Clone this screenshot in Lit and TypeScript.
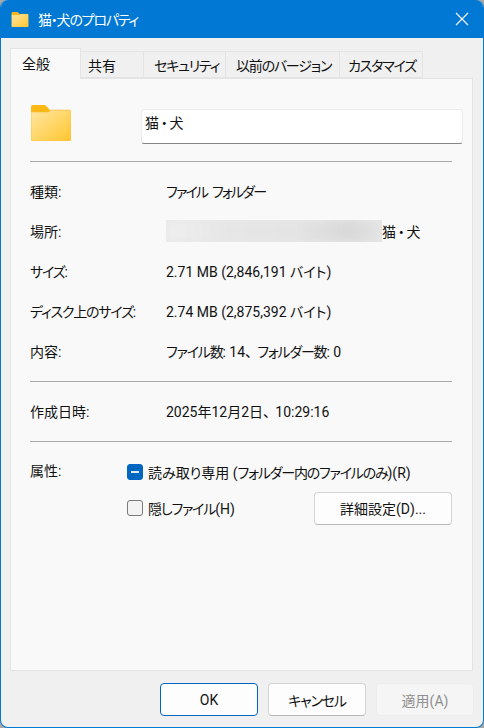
import { LitElement, html, css, svg } from "lit";
import { customElement } from "lit/decorators.js";

const folder = (w: number, h: number, id: string) => html`<svg width=${w} height=${h} viewBox="0 0 40 36">
  <defs><linearGradient id=${id} x1="0" y1="0" x2="1" y2="1"><stop offset="0" stop-color="#ffe6a3"/><stop offset="1" stop-color="#ffc62e"/></linearGradient></defs>
  ${svg`<path d="M0 2a2 2 0 0 1 2-2h11a3 3 0 0 1 2 .8L19 5v6H0z" fill="#fdb813"/>
  <path d="M0 7h17.5l2.5-2h18a2 2 0 0 1 2 2v27a2 2 0 0 1-2 2H2a2 2 0 0 1-2-2z" fill="url(#${id})" stroke="#f5b93a" stroke-width=".6"/>`}
</svg>`;

@customElement("app-root")
export class AppRoot extends LitElement {
  static styles = css`
    :host { display: block; width: 484px; height: 728px; background: #a8a8a8; font-family: Roboto, "Noto Sans CJK JP", sans-serif; font-size: 14px; color: #111; font-feature-settings: "palt"; }
    .k { letter-spacing: -1.2px; }
    .k2 { letter-spacing: -1.8px; word-spacing: 3px; }
    .w { font-feature-settings: normal; letter-spacing: -1.8px; }
    .win { box-sizing: border-box; width: 484px; height: 728px; border-radius: 8px; border: 1px solid #0078d4; border-top: 0; background: #f0f0f0; display: flex; flex-direction: column; overflow: hidden; }
    .title { height: 38px; flex: none; background: #0078d4; color: #fff; display: flex; align-items: center; padding-left: 10px; gap: 9px; font-size: 14px; }
    .title .t { flex: 1; }
    .close { width: 46px; display: flex; justify-content: center; margin-right: -2px; }
    .main { flex: 1; display: flex; flex-direction: column; padding: 10px 10px 0 9px; }
    .tabs { display: flex; align-items: flex-end; height: 30px; position: relative; z-index: 1; }
    .tab { box-sizing: border-box; height: 27px; border: 1px solid #e4e4e4; border-left: 0; padding-top: 1px; display: flex; align-items: center; background: #f0f0f0; white-space: nowrap; }
    .tab.t1 { width: 71px; height: 31px; margin-bottom: -1px; border: 1px solid #e4e4e4; border-bottom: 0; background: #f9f9f9; padding: 0 0 3px 11px; }
    .tab.t2 { width: 63px; padding-left: 7px; }
    .tab.t3 { width: 82px; padding-left: 10px; }
    .tab.t4 { width: 114px; padding-left: 10px; }
    .tab.t5 { width: 83px; padding-left: 8px; }
    .panel { box-sizing: border-box; height: 593px; background: #f9f9f9; border: 1px solid #e4e4e4; padding: 0 20px 0 19px; display: flex; flex-direction: column; }
    .head { height: 82px; flex: none; display: flex; align-items: flex-start; box-sizing: border-box; margin-right: -10px; }
    .ico { width: 110px; flex: none; display: flex; margin-top: 26px; padding-left: 1px; }
    .name { box-sizing: border-box; flex: none; width: 322px; height: 35px; margin-top: 30px; background: #fff; border: 1px solid #ececec; border-bottom: 1px solid #868686; border-radius: 3px; padding: 0 3px 10px; display: flex; align-items: center; }
    .hr { height: 1px; background: #a8a8a8; flex: none; }
    .rows { padding: 9px 0 10px; flex: none; }
    .row { height: 40px; display: grid; grid-template-columns: 136px 1fr; align-items: center; }
    .loc { display: flex; align-items: center; }
    .blur { width: 216px; height: 22px; overflow: hidden; background: #e8e8e8; }
    .blur i { display: block; width: 100%; height: 100%; filter: blur(4px); background: linear-gradient(90deg, #eeeeee, #e6e6e6 30%, #e4e4e4 60%, #d8d8d8 85%, #e4e4e4); }
    .attrs { display: grid; grid-template-columns: 97px 1fr; padding-top: 12px; }
    .attr-label { box-sizing: border-box; height: 36px; display: flex; align-items: center; padding-bottom: 4px; }
    .attr-col { display: flex; flex-direction: column; }
    .check { height: 36px; display: flex; align-items: center; gap: 5px; }
    .line { display: flex; align-items: center; justify-content: space-between; }
    .box { box-sizing: border-box; width: 16px; height: 16px; border-radius: 3px; border: 1px solid #7a7a7a; background: #f3f3f3; display: flex; align-items: center; justify-content: center; }
    .box.on { background: #0067c0; border-color: #0067c0; }
    .box.on i { display: block; width: 8px; height: 1.5px; background: #dfeaf5; }
    .btn { box-sizing: border-box; display: flex; align-items: center; justify-content: center; border-radius: 4px; border: 1px solid #d4d4d4; border-bottom-color: #b8b8b8; background: #fdfdfd; height: 33px; }
    .wide { width: 138px; }
    .foot { height: 56px; flex: none; box-sizing: border-box; display: flex; justify-content: flex-end; gap: 10px; padding-top: 12px; margin-right: -1px; }
    .foot .btn { width: 98px; }
    .btn.ok { border-color: #0067c0; }
    .btn.dis { border-color: #ececec; background: #f5f5f5; color: #8f8f8f; }
  `;

  render() {
    return html`<div class="win">
      <div class="title">
        ${folder(18, 15, "g1")}
        <span class="t k">猫・犬のプロパティ</span>
        <span class="close"><svg width="14" height="14" viewBox="0 0 14 14"><path d="M1 1l12 12M13 1L1 13" stroke="#fff" stroke-width="1.1" fill="none"/></svg></span>
      </div>
      <div class="main">
        <div class="tabs">
          <div class="tab t1">全般</div>
          <div class="tab t2">共有</div>
          <div class="tab t3 k">セキュリティ</div>
          <div class="tab t4 k">以前のバージョン</div>
          <div class="tab t5 k">カスタマイズ</div>
        </div>
        <div class="panel">
          <div class="head">
            <div class="ico">${folder(40, 36, "g2")}</div>
            <div class="name"><span class="w">猫・犬</span></div>
          </div>
          <div class="hr"></div>
          <div class="rows">
            <div class="row"><span>種類:</span><span class="k2">ファイル フォルダー</span></div>
            <div class="row"><span>場所:</span><span class="loc"><span class="blur"><i></i></span><span class="w">猫・犬</span></span></div>
            <div class="row"><span><span class="k">サイズ</span>:</span><span>2.71 MB (2,846,191 バイト)</span></div>
            <div class="row"><span><span class="k">ディスク上のサイズ</span>:</span><span>2.74 MB (2,875,392 バイト)</span></div>
            <div class="row"><span>内容:</span><span><span class="k">ファイル数</span>: 14<span class="w">、</span><span class="k">フォルダー数</span>: 0</span></div>
          </div>
          <div class="hr"></div>
          <div class="rows">
            <div class="row"><span>作成日時:</span><span>2025年12月2日<span class="w">、</span>10:29:16</span></div>
          </div>
          <div class="hr"></div>
          <div class="attrs">
            <div class="attr-label">属性:</div>
            <div class="attr-col">
              <div class="check"><span class="box on"><i></i></span><span>読み取り専用 (<span class="k">フォルダー内のファイルのみ</span>)(R)</span></div>
              <div class="line">
                <div class="check"><span class="box"></span><span><span class="k">隠しファイル</span>(H)</span></div>
                <div class="btn wide">詳細設定(D)...</div>
              </div>
            </div>
          </div>
        </div>
        <div class="foot">
          <div class="btn ok">OK</div>
          <div class="btn k">キャンセル</div>
          <div class="btn dis">適用(A)</div>
        </div>
      </div>
    </div>`;
  }
}
